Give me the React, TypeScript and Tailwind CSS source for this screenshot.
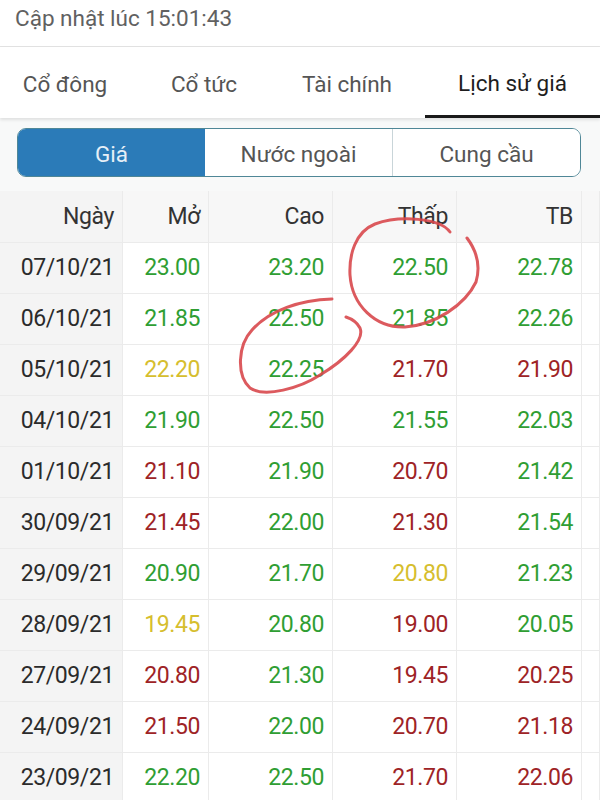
import React from "react";

type C = "g" | "r" | "y";
const rows: [string, [string, C], [string, C], [string, C], [string, C]][] = [
  ["07/10/21", ["23.00", "g"], ["23.20", "g"], ["22.50", "g"], ["22.78", "g"]],
  ["06/10/21", ["21.85", "g"], ["22.50", "g"], ["21.85", "g"], ["22.26", "g"]],
  ["05/10/21", ["22.20", "y"], ["22.25", "g"], ["21.70", "r"], ["21.90", "r"]],
  ["04/10/21", ["21.90", "g"], ["22.50", "g"], ["21.55", "g"], ["22.03", "g"]],
  ["01/10/21", ["21.10", "r"], ["21.90", "g"], ["20.70", "r"], ["21.42", "g"]],
  ["30/09/21", ["21.45", "r"], ["22.00", "g"], ["21.30", "r"], ["21.54", "g"]],
  ["29/09/21", ["20.90", "g"], ["21.70", "g"], ["20.80", "y"], ["21.23", "g"]],
  ["28/09/21", ["19.45", "y"], ["20.80", "g"], ["19.00", "r"], ["20.05", "g"]],
  ["27/09/21", ["20.80", "r"], ["21.30", "g"], ["19.45", "r"], ["20.25", "r"]],
  ["24/09/21", ["21.50", "r"], ["22.00", "g"], ["20.70", "r"], ["21.18", "r"]],
  ["23/09/21", ["22.20", "g"], ["22.50", "g"], ["21.70", "r"], ["22.06", "r"]],
];

const colorClass: Record<C, string> = {
  g: "text-[#2f9e33]",
  r: "text-[#9e2326]",
  y: "text-[#d6be2e]",
};

const cell =
  "flex items-center justify-end pr-[8px] pt-[1px] border-b border-r border-[#ebebeb] tracking-[-0.4px]";

export default function App() {
  return (
    <div
      className="relative w-[600px] h-[800px] overflow-hidden bg-white"
      style={{ fontFamily: "Roboto, 'Noto Sans', sans-serif" }}
    >
      <div className="h-[47px] flex items-center pl-[15px] text-[22.5px] text-[#616161] border-b border-[#e2e2e2] pb-[9px]">
        Cập nhật lúc 15:01:43
      </div>
      <div className="relative z-10 h-[71px] flex bg-white shadow-[0_2px_3px_rgba(0,0,0,0.10)] text-[22.5px]">
        <div className="w-[130px] pt-[5px] flex items-center justify-center text-[#555]">Cổ đông</div>
        <div className="w-[148px] pt-[5px] flex items-center justify-center text-[#555]">Cổ tức</div>
        <div className="w-[147px] pt-[5px] pr-[9px] flex items-center justify-center text-[#555]">Tài chính</div>
        <div className="w-[175px] flex flex-col">
          <div className="flex-1 pt-[5px] flex items-center justify-center text-[#1e1e1e]">Lịch sử giá</div>
          <div className="h-[3px] bg-[#1a1a1a]" />
        </div>
      </div>
      <div className="bg-[#f8f9f9] pt-[10px] pb-[14px] pl-[17px] pr-[19px]">
        <div className="h-[49px] flex rounded-[9px] border-[1.5px] border-[#4f8797] overflow-hidden text-[22.5px]">
          <div className="flex-1 pt-[4px] flex items-center justify-center bg-[#2b7bb8] text-[#e6eff7]">Giá</div>
          <div className="flex-1 pt-[4px] flex items-center justify-center bg-white text-[#555]">Nước ngoài</div>
          <div className="flex-1 pt-[4px] flex items-center justify-center bg-white text-[#555] border-l border-[#c9d5d9]">Cung cầu</div>
        </div>
      </div>
      <div className="grid grid-cols-[123px_86px_124px_124px_125px_18px] text-[23px]">
        <div className={`${cell} h-[52px] bg-[#f4f4f4] text-[#333]`}>Ngày</div>
        <div className={`${cell} h-[52px] bg-[#f7f7f7] text-[#333]`}>Mở</div>
        <div className={`${cell} h-[52px] bg-[#f7f7f7] text-[#333]`}>Cao</div>
        <div className={`${cell} h-[52px] bg-[#f7f7f7] text-[#333]`}>Thấp</div>
        <div className={`${cell} h-[52px] bg-[#f7f7f7] text-[#333]`}>TB</div>
        <div className={`${cell} h-[52px] bg-[#f7f7f7]`} />
        {rows.map(([d, a, b, c, e]) => (
          <React.Fragment key={d}>
            <div className={`${cell} h-[51px] bg-[#f4f4f4] text-[#2b2b2b]`}>{d}</div>
            <div className={`${cell} h-[51px] bg-white ${colorClass[a[1]]}`}>{a[0]}</div>
            <div className={`${cell} h-[51px] bg-white ${colorClass[b[1]]}`}>{b[0]}</div>
            <div className={`${cell} h-[51px] bg-white ${colorClass[c[1]]}`}>{c[0]}</div>
            <div className={`${cell} h-[51px] bg-white ${colorClass[e[1]]}`}>{e[0]}</div>
            <div className={`${cell} h-[51px] bg-white`} />
          </React.Fragment>
        ))}
      </div>
      <svg
        className="absolute left-0 top-0 pointer-events-none"
        width="600"
        height="800"
        viewBox="0 0 600 800"
        fill="none"
      >
        <path
          d="M450 232 C 440 218, 400 215, 375 224 C 355 232, 349 255, 350 275 C 352 305, 375 328, 405 327 C 435 325, 465 305, 476 282 C 481 265, 476 250, 467 238"
          stroke="#d8484c"
          strokeOpacity="0.9"
          strokeWidth="3"
          strokeLinecap="round"
        />
        <path
          d="M332 299 C 300 300, 270 310, 252 330 C 238 345, 236 375, 250 388 C 265 398, 300 388, 320 375 C 345 360, 365 340, 360 328 C 357 322, 352 319, 346 317"
          stroke="#d8484c"
          strokeOpacity="0.9"
          strokeWidth="3"
          strokeLinecap="round"
        />
      </svg>
    </div>
  );
}
